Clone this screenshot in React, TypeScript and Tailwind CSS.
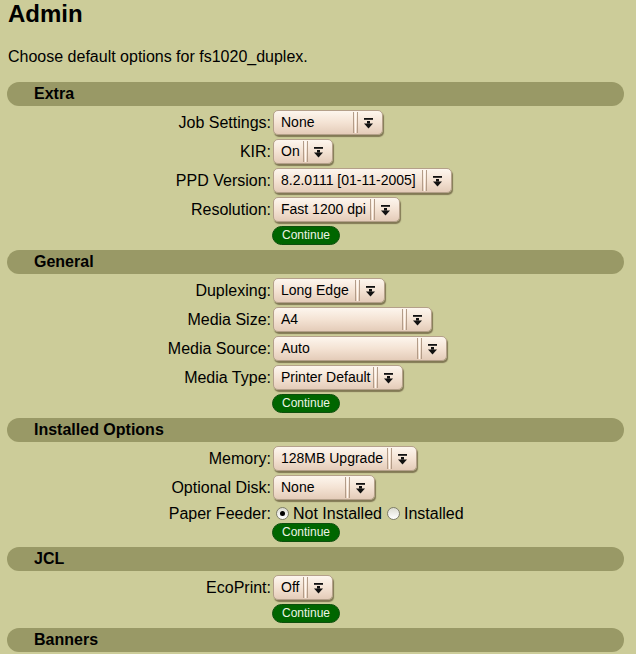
import React from 'react';

type SelectRow = { kind: 'select'; label: string; value: string; width: number };
type RadioRow = { kind: 'radio'; label: string; options: string[]; checked: number };
type Row = SelectRow | RadioRow;

type Section = { title: string; rows: Row[] };

const sections: Section[] = [
  {
    title: 'Extra',
    rows: [
      { kind: 'select', label: 'Job Settings:', value: 'None', width: 110 },
      { kind: 'select', label: 'KIR:', value: 'On', width: 60 },
      { kind: 'select', label: 'PPD Version:', value: '8.2.0111 [01-11-2005]', width: 179 },
      { kind: 'select', label: 'Resolution:', value: 'Fast 1200 dpi', width: 127 },
    ],
  },
  {
    title: 'General',
    rows: [
      { kind: 'select', label: 'Duplexing:', value: 'Long Edge', width: 112 },
      { kind: 'select', label: 'Media Size:', value: 'A4', width: 159 },
      { kind: 'select', label: 'Media Source:', value: 'Auto', width: 174 },
      { kind: 'select', label: 'Media Type:', value: 'Printer Default', width: 130 },
    ],
  },
  {
    title: 'Installed Options',
    rows: [
      { kind: 'select', label: 'Memory:', value: '128MB Upgrade', width: 144 },
      { kind: 'select', label: 'Optional Disk:', value: 'None', width: 102 },
      { kind: 'radio', label: 'Paper Feeder:', options: ['Not Installed', 'Installed'], checked: 0 },
    ],
  },
  {
    title: 'JCL',
    rows: [{ kind: 'select', label: 'EcoPrint:', value: 'Off', width: 60 }],
  },
];

function DropArrow() {
  return (
    <svg width="9" height="11" viewBox="0 0 9 11" className="block">
      <rect x="0" y="0" width="9" height="1.8" fill="#111" />
      <rect x="3" y="3" width="3" height="2.6" fill="#111" />
      <polygon points="0,5.4 9,5.4 4.5,10.5" fill="#111" />
    </svg>
  );
}

function FakeSelect({ value, width }: { value: string; width: number }) {
  return (
    <div
      className="relative flex h-[25px] items-center rounded-[5px] border border-[#b4a08a] bg-gradient-to-b from-[#fdf6ee] via-[#f4e3d4] to-[#e4ccb9] shadow-[1px_2px_1px_rgba(80,65,40,0.6)]"
      style={{ width }}
    >
      <span className="flex-1 truncate pl-[7px] text-[14px] leading-[25px] text-black">{value}</span>
      <span className="flex h-[21px] w-[5px] justify-between">
        <span className="w-px bg-[#b39c88]" />
        <span className="w-px bg-[#fff8f0]" />
        <span className="w-px bg-[#b39c88]" />
      </span>
      <span className="ml-[6px] mr-[9px] mt-[2px]">
        <DropArrow />
      </span>
    </div>
  );
}

function Radio({ checked }: { checked: boolean }) {
  return (
    <span className="relative ml-[5px] mr-[4px] inline-flex h-[13px] w-[13px] items-center justify-center rounded-full border border-[#7d7d6a] bg-gradient-to-b from-[#dcdcd2] to-white">
      {checked && <span className="h-[5px] w-[5px] rounded-full bg-black" />}
    </span>
  );
}

function ContinueButton() {
  return (
    <div className="flex h-[20px]">
      <div className="w-[272px]" />
      <button className="h-[19px] w-[68px] rounded-full border border-[#0d4f0d] bg-[#006600] text-[12px] leading-[17px] text-[#eef4e6]">
        Continue
      </button>
    </div>
  );
}

export default function App() {
  return (
    <div className="min-h-[654px] w-[636px] overflow-hidden bg-[#cccc99] font-['Liberation_Sans',Arial,sans-serif] text-black">
      <h2 className="pl-[8px] text-[24px] font-bold leading-[28px]">Admin</h2>
      <p className="mt-[19px] pl-[8px] text-[16px] leading-5">Choose default options for fs1020_duplex.</p>

      <div className="mt-[15px]">
        {sections.map((s) => (
          <div key={s.title}>
            <div className="ml-[7px] mr-[12px] h-6 rounded-full bg-[#999966] pl-[27px]">
              <span className="text-[16px] font-bold leading-5">{s.title}</span>
            </div>
            <div className="pt-[4px] pb-[4px]">
              {s.rows.map((r) =>
                r.kind === 'select' ? (
                  <div key={r.label} className="flex h-[29px] items-start">
                    <div className="w-[271px] text-right text-[16px] leading-[25px]">{r.label}</div>
                    <div className="ml-[2px]">
                      <FakeSelect value={r.value} width={r.width} />
                    </div>
                  </div>
                ) : (
                  <div key={r.label} className="flex h-[19px] items-center">
                    <div className="w-[271px] text-right text-[16px] leading-[19px]">{r.label}</div>
                    <div className="flex items-center text-[16px] leading-[19px]">
                      {r.options.map((o, i) => (
                        <span key={o} className="flex items-center">
                          <Radio checked={i === r.checked} />
                          <span>{o}</span>
                        </span>
                      ))}
                    </div>
                  </div>
                )
              )}
              <ContinueButton />
            </div>
          </div>
        ))}
        <div className="ml-[7px] mr-[12px] h-6 rounded-full bg-[#999966] pl-[27px]">
          <span className="text-[16px] font-bold leading-5">Banners</span>
        </div>
      </div>
    </div>
  );
}
